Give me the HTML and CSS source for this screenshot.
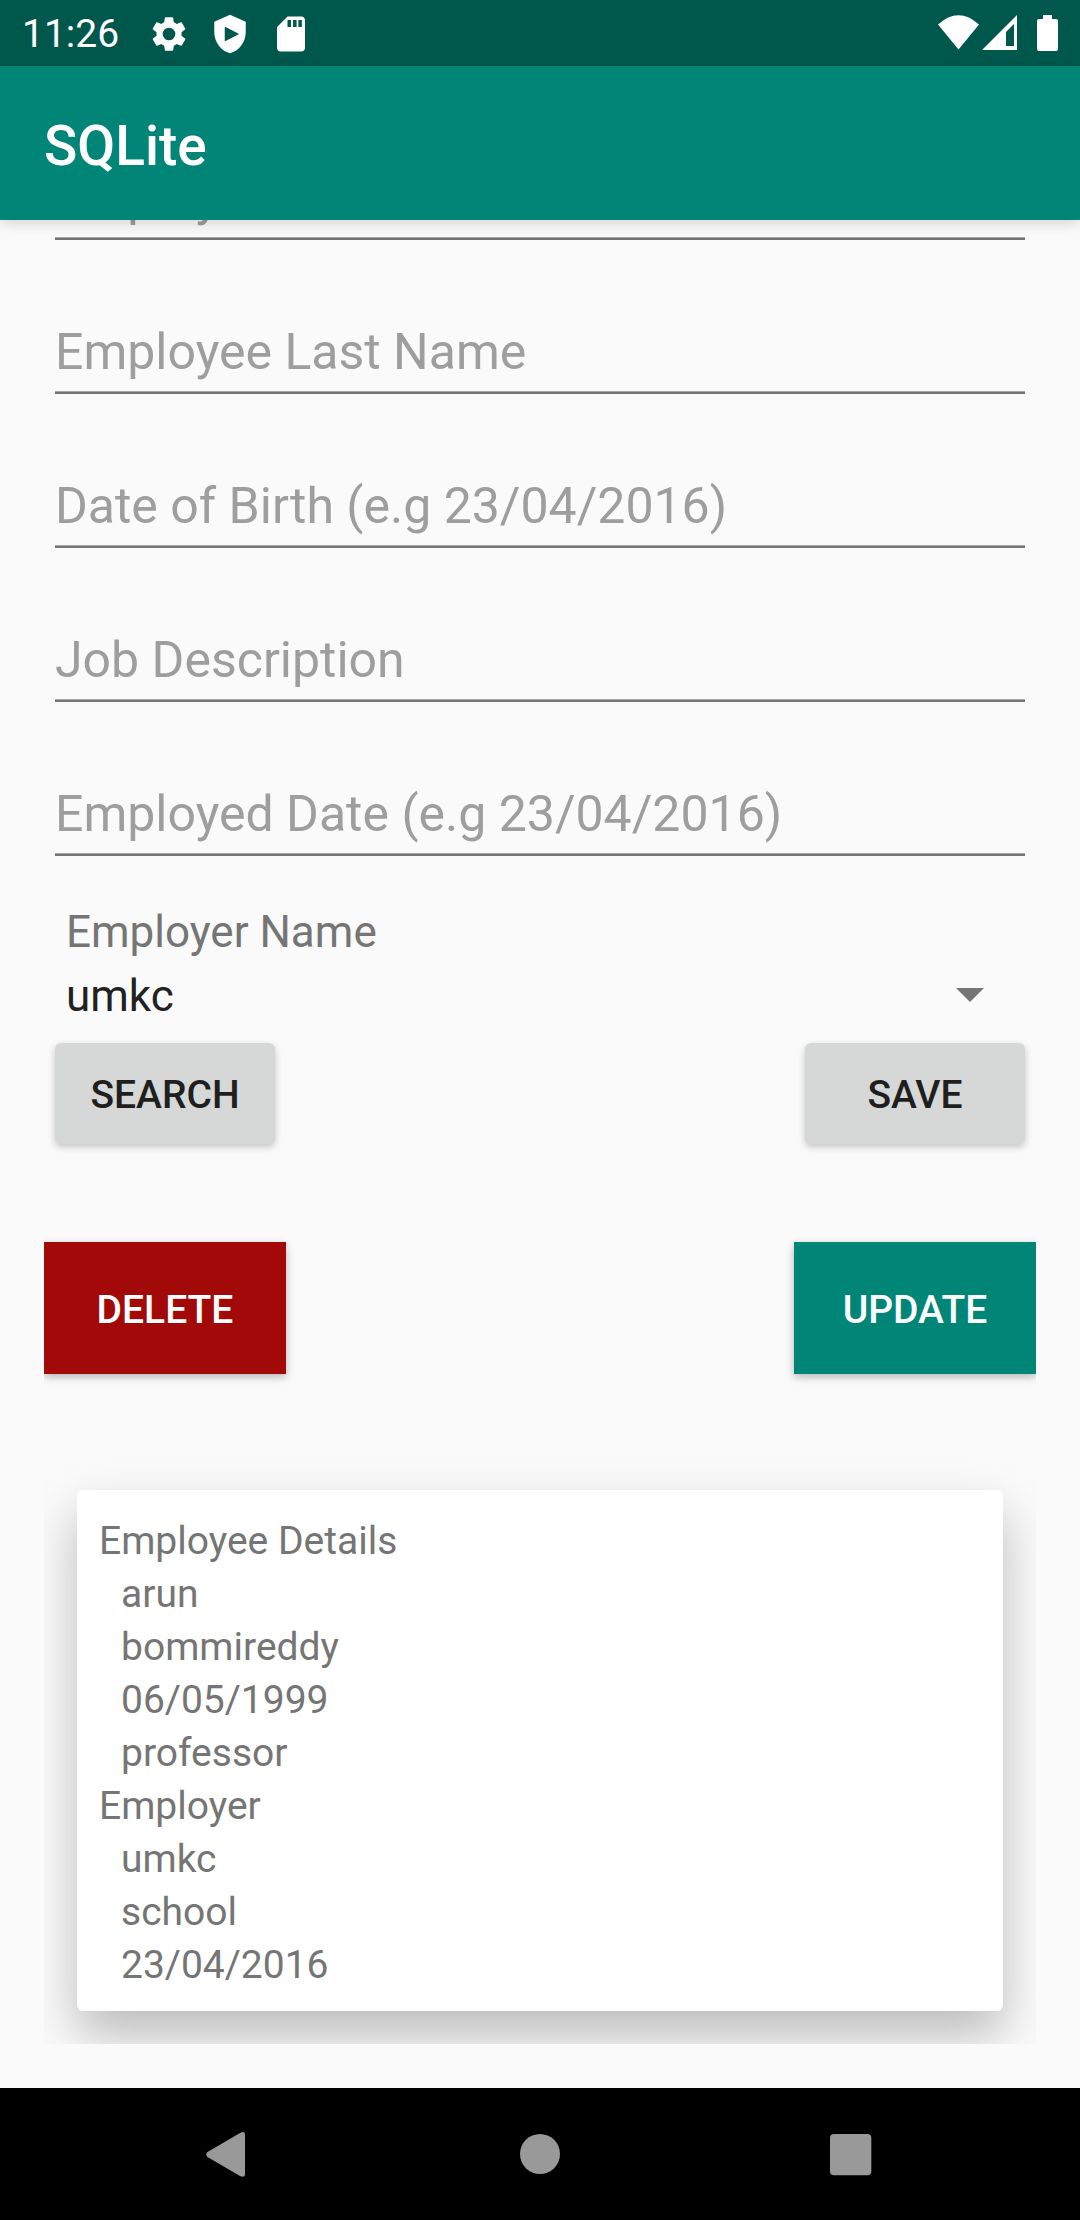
FILE: index.html
```html
<!DOCTYPE html>
<html lang="en">
<head>
<meta charset="utf-8">
<title>SQLite</title>
<link rel="stylesheet" href="styles.css">
</head>
<body>
<div class="screen">
  <header class="status">
    <span class="clock">11:26</span>
    <svg class="gear" viewBox="0 0 24 24"><path d="M19.14 12.94c.04-.3.06-.61.06-.94s-.02-.64-.07-.94l2.03-1.58a.49.49 0 0 0 .12-.61l-1.92-3.32a.49.49 0 0 0-.59-.22l-2.39.96a7 7 0 0 0-1.62-.94l-.36-2.54a.48.48 0 0 0-.48-.41h-3.84a.47.47 0 0 0-.47.41l-.36 2.54c-.59.24-1.13.57-1.62.94l-2.39-.96a.48.48 0 0 0-.59.22L2.74 8.87a.47.47 0 0 0 .12.61l2.03 1.58a6 6 0 0 0 0 1.88l-2.03 1.58a.49.49 0 0 0-.12.61l1.92 3.32c.12.22.37.29.59.22l2.39-.96c.5.38 1.03.7 1.62.94l.36 2.54c.05.24.24.41.48.41h3.84c.24 0 .44-.17.47-.41l.36-2.54c.59-.24 1.13-.56 1.62-.94l2.39.96c.22.08.47 0 .59-.22l1.92-3.32a.47.47 0 0 0-.12-.61zM12 15.6a3.6 3.6 0 1 1 0-7.2 3.6 3.6 0 0 1 0 7.2z"/></svg>
    <svg class="shield" viewBox="0 0 24 24"><path fill-rule="evenodd" d="M12 1L3 5v6c0 5.55 3.84 10.74 9 12 5.16-1.26 9-6.45 9-12V5zM9 8.300Q9 7.800 9.500 8L17.200 12L9.500 16Q9 16.200 9 15.700z"/></svg>
    <svg class="sd" viewBox="0 0 24 24"><path d="M18 2h-8L4.02 8 4 20c0 1.1.9 2 2 2h12c1.1 0 2-.9 2-2V4c0-1.100-.9-2-2-2zm-6 6h-2V4h2zm3.200 0h-2V4h2zm3 0h-2V4h2z"/></svg>
    <svg class="system" viewBox="0 0 124 66"><path d="M4 24.500Q24.500 6 45 24.500L24.500 49.500z"/><path fill-rule="evenodd" d="M83 15V50H48zM80 24L72 32V46H80z"/><path d="M109 15h9v4h4q2 0 2 2v28q0 2-2 2h-17q-2 0-2-2V21q0-2 2-2h4z"/></svg>
  </header>
  <header class="bar"><h1>SQLite</h1></header>
  <main>
    <div class="field first"><span>Employee First Name</span></div>
    <div class="field"><span>Employee Last Name</span></div>
    <div class="field"><span>Date of Birth (e.g 23/04/2016)</span></div>
    <div class="field"><span>Job Description</span></div>
    <div class="field"><span>Employed Date (e.g 23/04/2016)</span></div>
    <div class="label">Employer Name</div>
    <div class="select"><span>umkc</span><i class="arrow"></i></div>
    <div class="row plain"><button>SEARCH</button><button>SAVE</button></div>
    <div class="row solid"><button class="delete">DELETE</button><button class="update">UPDATE</button></div>
    <section class="list"><article class="card">
      <p>Employee Details</p><p class="in">arun</p><p class="in">bommireddy</p><p class="in">06/05/1999</p><p class="in">professor</p><p>Employer</p><p class="in">umkc</p><p class="in">school</p><p class="in">23/04/2016</p>
    </article></section>
  </main>
  <nav><svg viewBox="0 0 1080 132"><path d="M207.500 64L240 45Q245 42.500 245 47V86Q245 90 240 88L207.500 69Q205 66.500 207.500 64Z"/><circle cx="540" cy="66" r="20"/><rect x="830" y="46" width="41.300" height="41.300" rx="4"/></svg></nav>
</div>
</body>
</html>
```
FILE: styles.css
```css
* { box-sizing: border-box; }
body { margin: 0; font-family: Roboto, sans-serif; background: #fafafa; }
.screen { width: 1080px; height: 2220px; display: flex; flex-direction: column; overflow: hidden; }
.status { height: 66px; flex: none; background: #00574b; color: #fff; display: flex; align-items: center; padding: 0 22px; }
.status svg { fill: #fff; flex: none; }
.clock { font-size: 39px; width: 126px; padding-top: 2px; }
.gear, .shield, .sd { width: 42px; height: 42px; margin: 1px 19px 0 0; }
.status .system { width: 124px; height: 66px; margin-left: auto; }
.bar { height: 154px; flex: none; background: #008577; color: #fff; display: flex; align-items: center; padding: 6px 44px 0; box-shadow: 0 4px 12px rgba(0,0,0,.14); position: relative; z-index: 1; }
h1 { font-size: 55px; font-weight: 500; margin: 0; }
main { flex: 1; min-height: 0; padding: 0 44px; overflow: hidden; }
.field { height: 154px; margin: 0 11px; border-bottom: 2px solid #757575; box-shadow: inset 0 -1px #a5a5a5; color: #9e9e9e; font-size: 50px; line-height: 59px; display: flex; align-items: flex-end; padding-bottom: 10px; white-space: nowrap; }
.first { margin-top: -134px; }
.label, .select { font-size: 44px; line-height: 59px; padding-left: 22px; color: #757575; }
.label { margin-top: 47px; }
.select { margin-top: 5px; color: #212121; display: flex; align-items: center; justify-content: space-between; padding-right: 52px; }
.arrow { border: 14px solid transparent; border-top-color: #757575; border-bottom: 0; margin-bottom: 3px; }
.row { display: flex; justify-content: space-between; }
button { border: 0; font: 500 39px Roboto, sans-serif; color: #1f1f1f; padding: 2px 0 0; }
.plain { margin: 17px 11px 0; }
.plain button { width: 220px; height: 101px; background: #d6d8d7; border-radius: 6px; box-shadow: 0 3px 7px rgba(0,0,0,.22); }
.solid { margin-top: 98px; clip-path: inset(-20px 0); }
.solid button { width: 242px; height: 132px; padding-top: 4px; color: #fff; box-shadow: 0 3px 8px rgba(0,0,0,.28); }
.solid .delete { background: #a20909; }
.solid .update { background: #008577; }
.list { margin-top: 83px; padding: 33px; overflow: hidden; }
.card { height: 521px; background: #fff; border-radius: 6px; padding: 25px 22px; box-shadow: 0 24px 50px rgba(0,0,0,.255); color: #757575; font-size: 39px; line-height: 53px; }
.card p { margin: 0; }
.card .in { padding-left: 22px; }
nav { height: 132px; flex: none; background: #000; }
nav svg { display: block; width: 1080px; height: 132px; fill: #999; }
```
